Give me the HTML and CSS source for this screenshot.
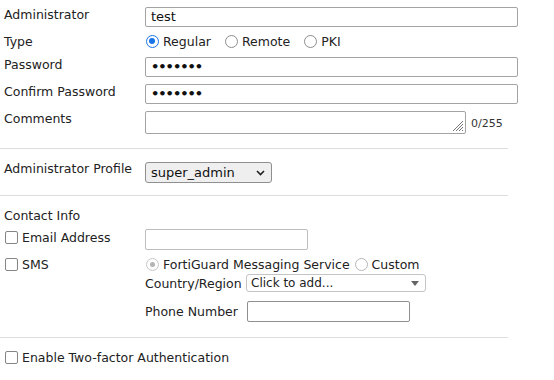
FILE: index.html
```html
<!DOCTYPE html>
<html>
<head>
<meta charset="utf-8">
<link rel="stylesheet" href="styles.css">
</head>
<body>
<div class="form">
  <div class="row r-admin">
    <div class="label">Administrator</div>
    <div class="field"><div class="input wide">test</div></div>
  </div>
  <div class="row r-type">
    <div class="label">Type</div>
    <div class="field radios">
      <span class="radio checked"></span><span class="rtext">Regular</span>
      <span class="radio"></span><span class="rtext">Remote</span>
      <span class="radio"></span><span class="rtext">PKI</span>
    </div>
  </div>
  <div class="row r-pw">
    <div class="label">Password</div>
    <div class="field"><div class="input wide dots">&#8226;&#8226;&#8226;&#8226;&#8226;&#8226;&#8226;</div></div>
  </div>
  <div class="row r-pw">
    <div class="label">Confirm Password</div>
    <div class="field"><div class="input wide dots">&#8226;&#8226;&#8226;&#8226;&#8226;&#8226;&#8226;</div></div>
  </div>
  <div class="row r-comments">
    <div class="label">Comments</div>
    <div class="field comments">
      <div class="textarea">
        <svg class="grip" width="14" height="14" viewBox="0 0 14 14"><path d="M13 3 L3 13 M13 6 L6 13 M13 9 L9 13 M13 12 L12 13" stroke="#777" stroke-width="1"/></svg>
      </div>
      <span class="count">0/255</span>
    </div>
  </div>
  <div class="sep s1"></div>
  <div class="row r-profile">
    <div class="label">Administrator Profile</div>
    <div class="field">
      <div class="select">super_admin
        <svg class="chev" width="9" height="6" viewBox="0 0 9 6"><path d="M1 1 L4.5 4.5 L8 1" fill="none" stroke="#222" stroke-width="1.6"/></svg>
      </div>
    </div>
  </div>
  <div class="sep s2"></div>
  <div class="heading">Contact Info</div>
  <div class="row r-email">
    <div class="label"><span class="check"></span>Email Address</div>
    <div class="field"><div class="input email"></div></div>
  </div>
  <div class="row r-sms">
    <div class="label"><span class="check"></span>SMS</div>
    <div class="field sms">
      <div class="radios sms-radios">
        <span class="radio disabled-checked"></span><span class="rtext">FortiGuard Messaging Service</span>
        <span class="radio light"></span><span class="rtext">Custom</span>
      </div>
      <div class="sub country">
        <span class="sublabel">Country/Region</span>
        <div class="combo">Click to add...
          <svg class="tri" width="8" height="5" viewBox="0 0 8 5"><path d="M0 0 H8 L4 5 Z" fill="#666"/></svg>
        </div>
      </div>
      <div class="sub phone">
        <span class="sublabel">Phone Number</span>
        <div class="input phonebox"></div>
      </div>
    </div>
  </div>
  <div class="sep s3"></div>
  <div class="twofactor"><span class="check"></span>Enable Two-factor Authentication</div>
</div>
</body>
</html>
```

FILE: styles.css
```css
html, body {
  margin: 0;
  padding: 0;
  background: #fff;
}
body {
  font-family: "DejaVu Sans", Verdana, sans-serif;
  font-size: 12.5px;
  color: #222;
}
.form {
  width: 508px;
  padding-top: 7px;
}
.row {
  display: grid;
  grid-template-columns: 145px 1fr;
  align-items: start;
}
.label {
  padding-left: 4px;
  line-height: 15px;
  display: flex;
  align-items: center;
  white-space: nowrap;
}
.input {
  box-sizing: border-box;
  height: 20px;
  border: 1px solid #a3a3a3;
  border-radius: 2px;
  padding: 0 5px;
  line-height: 18px;
  font-size: 13px;
  color: #111;
  background: #fff;
}
.input.wide { width: 373px; }
.dots { font-size: 13px; letter-spacing: -1px; font-weight: bold; }
.r-admin { height: 27px; }
.r-type { height: 23px; }
.radios {
  display: flex;
  align-items: center;
  height: 15px;
}
.radio {
  box-sizing: border-box;
  width: 13px;
  height: 13px;
  border: 1.5px solid #8c8c8c;
  border-radius: 50%;
  margin: 0 4px 0 1px;
  position: relative;
  flex: none;
  background: #fff;
}
.radio.checked {
  border: 1.5px solid #1a73e8;
}
.radio.checked::after {
  content: "";
  position: absolute;
  left: 2px; top: 2px;
  width: 6px; height: 6px;
  border-radius: 50%;
  background: #1a73e8;
}
.radio.disabled-checked { border: 1px solid #c6c6c6; }
.radio.disabled-checked::after {
  content: "";
  position: absolute;
  left: 3px; top: 3px;
  width: 5px; height: 5px;
  border-radius: 50%;
  background: #b4b4b4;
}
.radio.light { border: 1px solid #b8b8b8; }
.rtext { margin-right: 13px; }
.sms-radios .rtext { margin-right: 4px; }
.r-pw { height: 27px; }
.r-comments { height: 28px; }
.comments { display: flex; align-items: center; }
.textarea {
  box-sizing: border-box;
  width: 321px;
  height: 23px;
  border: 1px solid #a3a3a3;
  border-radius: 2px;
  position: relative;
}
.grip { position: absolute; right: 1px; bottom: 1px; }
.count { font-size: 11px; margin-left: 5px; margin-top: 2px; color: #333; }
.sep {
  height: 1px;
  background: #ddd;
}
.s1 { margin: 9px 0 13px; }
.s2 { margin: 12px 0 12px; }
.r-profile { height: 21px; }
.select {
  box-sizing: border-box;
  width: 127px;
  height: 21px;
  border: 1px solid #8f8f8f;
  border-radius: 3px;
  background: #efefef;
  display: flex;
  align-items: center;
  justify-content: space-between;
  padding: 0 6px 0 5px;
  font-size: 13px;
  color: #111;
}
.r-profile .label { margin-top: -1px; }
.heading { padding-left: 4px; margin-top: 12px; line-height: 15px; }
.r-email { height: 28px; margin-top: 6px; }
.check {
  box-sizing: border-box;
  width: 13px;
  height: 13px;
  border: 1.5px solid #858585;
  border-radius: 2px;
  margin: 0 4px 0 1px;
  flex: none;
}
.r-email .label { padding-top: 1px; }
.input.email { width: 163px; height: 21px; border-color: #bdbdbd; }
.sms-radios { height: 15px; }
.sub { display: flex; align-items: center; }
.sublabel { width: 101px; flex: none; white-space: nowrap; }
.country { margin-top: 2px; height: 18px; }
.combo {
  box-sizing: border-box;
  width: 180px;
  height: 18px;
  border: 1px solid #c4c4c4;
  border-radius: 3px;
  display: flex;
  align-items: center;
  justify-content: space-between;
  padding: 0 6px 0 4px;
  font-size: 12px;
}
.phone { margin-top: 9px; }
.input.phonebox { width: 163px; height: 21px; margin-left: 1px; border-color: #8f8f8f; }
.s3 { margin: 15px 0 12px; }
.twofactor { padding-left: 4px; display: flex; align-items: center; line-height: 15px; }
```
